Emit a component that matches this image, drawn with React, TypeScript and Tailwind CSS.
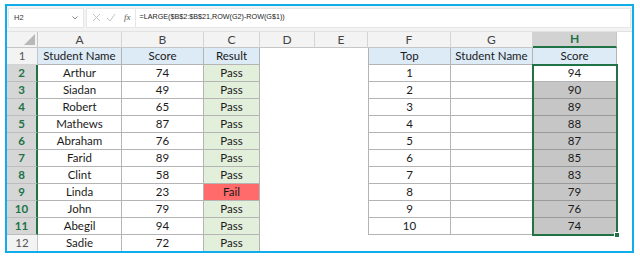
import React from "react";

const W = [31, 84, 82, 56, 55, 53, 83, 82, 84];
const LETTERS = ["A", "B", "C", "D", "E", "F", "G", "H"];

const left: [string, string, string][] = [
  ["Arthur", "74", "Pass"],
  ["Siadan", "49", "Pass"],
  ["Robert", "65", "Pass"],
  ["Mathews", "87", "Pass"],
  ["Abraham", "76", "Pass"],
  ["Farid", "89", "Pass"],
  ["Clint", "58", "Pass"],
  ["Linda", "23", "Fail"],
  ["John", "79", "Pass"],
  ["Abegil", "94", "Pass"],
  ["Sadie", "72", "Pass"],
];
const scores = ["94", "90", "89", "88", "87", "85", "83", "79", "76", "74"];

const font = { fontFamily: "Lato, 'Liberation Sans', sans-serif" };

function Cell({
  w,
  className = "",
  children,
}: {
  w: number;
  className?: string;
  children?: React.ReactNode;
}) {
  return (
    <div
      className={`shrink-0 h-full flex items-center justify-center box-border overflow-hidden whitespace-nowrap ${className}`}
      style={{ width: w }}
    >
      {children}
    </div>
  );
}

const tb = "border-r border-b border-[#b4b4b4]";

export default function App() {
  const rows = [];
  for (let r = 1; r <= 12; r++) {
    const sel = r >= 2 && r <= 11;
    const cells: React.ReactNode[] = [];
    cells.push(
      <Cell
        key="h"
        w={W[0]}
        className={
          sel
            ? "bg-[#d6d6d6] text-[#217346] font-bold border-b border-[#bdbdbd] border-r-2 border-r-[#217346] text-[11.5px]"
            : "bg-[#f3f3f3] text-[#555] border-b border-[#d4d4d4] border-r border-r-[#c6c6c6] text-[11.5px]"
        }
      >
        {r}
      </Cell>
    );
    if (r === 1) {
      cells.push(
        <Cell key="a" w={W[1]} className={`bg-[#ddebf7] ${tb}`}>Student Name</Cell>,
        <Cell key="b" w={W[2]} className={`bg-[#ddebf7] ${tb}`}>Score</Cell>,
        <Cell key="c" w={W[3]} className={`bg-[#ddebf7] ${tb}`}>Result</Cell>
      );
    } else {
      const d = left[r - 2];
      cells.push(
        <Cell key="a" w={W[1]} className={`bg-white ${tb}`}>{d[0]}</Cell>,
        <Cell key="b" w={W[2]} className={`bg-white ${tb}`}>{d[1]}</Cell>,
        <Cell
          key="c"
          w={W[3]}
          className={`${d[2] === "Fail" ? "bg-[#ff6b6b]" : "bg-[#e2efda]"} ${tb}`}
        >
          {d[2]}
        </Cell>
      );
    }
    cells.push(<Cell key="d" w={W[4]} className="bg-white" />, <Cell key="e" w={W[5]} className="bg-white" />);
    if (r === 1) {
      cells.push(
        <Cell key="f" w={W[6]} className={`bg-[#ddebf7] border-l ${tb}`}>Top</Cell>,
        <Cell key="g" w={W[7]} className={`bg-[#ddebf7] ${tb}`}>Student Name</Cell>,
        <Cell key="hh" w={W[8]} className={`bg-[#ddebf7] ${tb}`}>Score</Cell>
      );
    } else if (r <= 11) {
      cells.push(
        <Cell key="f" w={W[6]} className={`bg-white border-l ${tb}`}>{r - 1}</Cell>,
        <Cell key="g" w={W[7]} className={`bg-white ${tb}`} />,
        <Cell
          key="hh"
          w={W[8]}
          className={
            r === 2
              ? `bg-white ${tb}`
              : "bg-[#c6c6c6] border-r border-b border-[#9a9a9a]"
          }
        >
          {scores[r - 2]}
        </Cell>
      );
    }
    rows.push(
      <div key={r} className="flex h-[17px] text-[11.5px] text-[#1a1a1a]">
        {cells}
      </div>
    );
  }

  return (
    <div className="w-[640px] h-[260px] bg-white overflow-hidden" style={font}>
      <div className="ml-[5px] mt-[4px] w-[629px] h-[249px] border-2 border-[#11adea] overflow-hidden bg-white flex flex-col">
        {/* formula bar */}
        <div className="h-[26px] shrink-0 bg-[#f3f3f3] flex items-center px-[1px] pt-[1px] pb-[3px] gap-[2px] border-b border-[#e2e2e2]">
          <div className="w-[76px] h-[20px] bg-white flex items-center justify-between pl-[5px] pr-[5px] border border-[#e6e6e6]">
            <span className="text-[7.5px] text-[#333]" style={{ fontFamily: "'Liberation Sans', sans-serif" }}>H2</span>
            <svg width="6" height="4" viewBox="0 0 6 4">
              <path d="M0.5 0.5 L3 3 L5.5 0.5" fill="none" stroke="#888" strokeWidth="1" />
            </svg>
          </div>
          <div className="flex-1 h-[20px] bg-white flex items-center border border-[#e6e6e6]">
            <div className="flex items-center gap-[5px] pl-[5px] pr-[4px]">
              <svg width="9" height="9" viewBox="0 0 9 9">
                <path d="M1 1 L8 8 M8 1 L1 8" stroke="#c4c4c4" strokeWidth="1" />
              </svg>
              <svg width="10" height="9" viewBox="0 0 10 9">
                <path d="M1 5 L4 8 L9 1" fill="none" stroke="#c4c4c4" strokeWidth="1" />
              </svg>
              <span className="italic text-[9px] text-[#555] ml-[3px]" style={{ fontFamily: "'Liberation Serif', serif" }}>
                fx
              </span>
            </div>
            <div className="h-full w-px bg-[#e6e6e6]" />
            <span
              className="pl-[4px] text-[7.2px] text-[#222]"
              style={{ fontFamily: "'Liberation Sans', sans-serif" }}
            >
              =LARGE($B$2:$B$21,ROW(G2)-ROW(G$1))
            </span>
          </div>
        </div>
        {/* grid */}
        <div className="relative flex-1">
          <div className="flex h-[16px] text-[12px] text-[#444]">
            <Cell w={W[0]} className="bg-[#f3f3f3] border-r border-b border-[#c6c6c6] relative">
              <svg className="absolute right-[2px] bottom-[2px]" width="11" height="11" viewBox="0 0 11 11">
                <path d="M11 0 L11 11 L0 11 Z" fill="#b8b8b8" />
              </svg>
            </Cell>
            {LETTERS.map((l, i) => (
              <Cell
                key={l}
                w={W[i + 1]}
                className={
                  l === "H"
                    ? "bg-[#d2d2d2] text-[#217346] font-bold border-r border-[#c6c6c6] border-b-2 border-b-[#217346]"
                    : "bg-[#f3f3f3] border-r border-[#d4d4d4] border-b border-b-[#c6c6c6]"
                }
              >
                {l}
              </Cell>
            ))}
          </div>
          {rows}
          {/* selection overlay */}
          <div className="absolute left-[525px] top-[32px] w-[86px] h-[172px] border-2 border-[#217346] pointer-events-none" />
          <div className="absolute left-[607px] top-[200px] w-[6px] h-[6px] bg-[#217346] border border-white pointer-events-none" />
        </div>
      </div>
    </div>
  );
}
